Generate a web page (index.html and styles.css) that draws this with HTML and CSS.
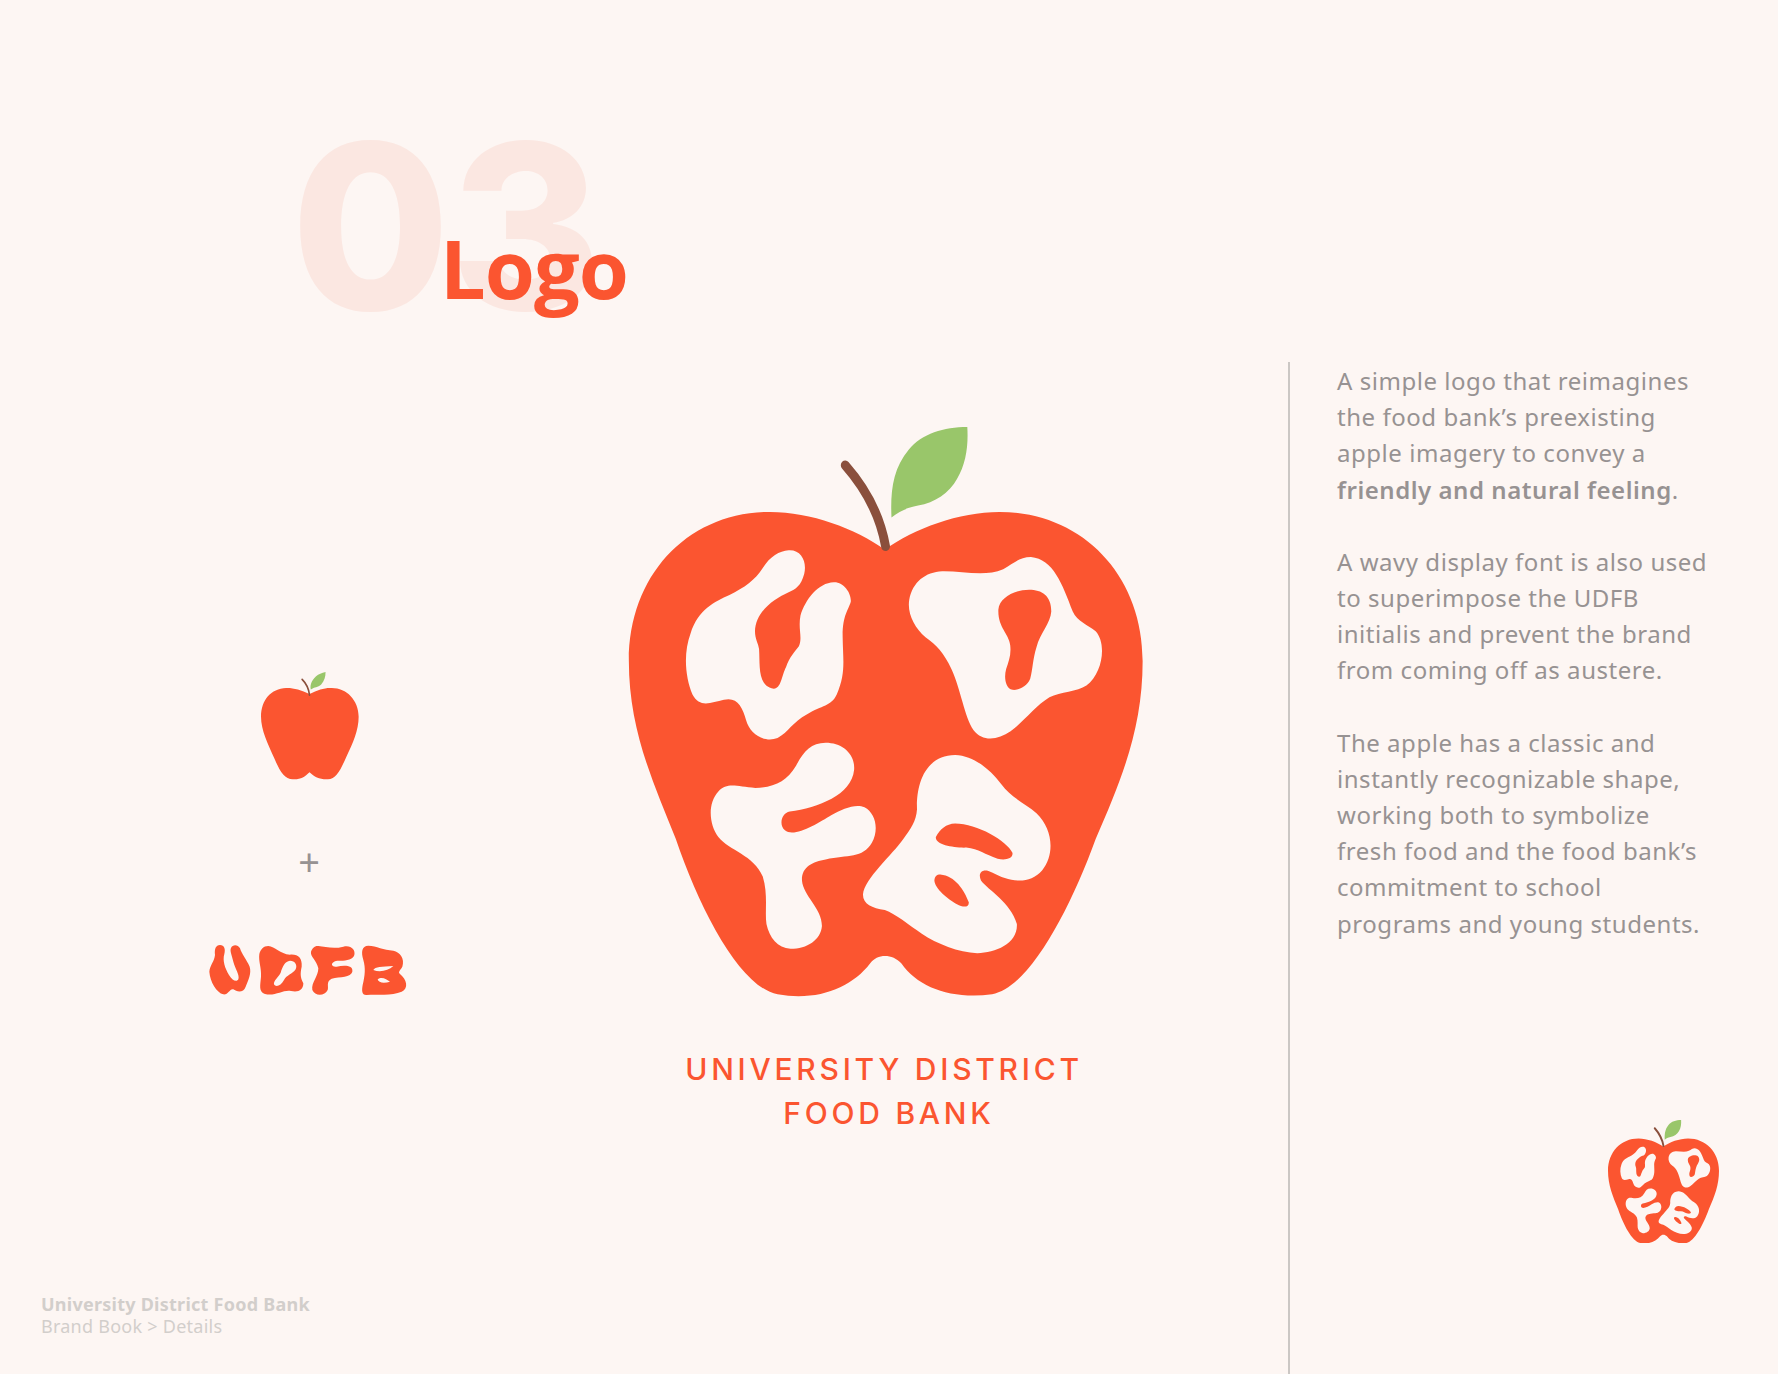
FILE: index.html
```html
<!DOCTYPE html>
<html lang="en">
<head>
<meta charset="utf-8">
<title>University District Food Bank – Logo</title>
<link rel="stylesheet" href="styles.css">
</head>
<body>
<svg class="defs" width="0" height="0" aria-hidden="true">
  <defs>
    <g id="apple-full">
      <path class="red" d="M770 378C690 325 570 283 460 283C240 283 78 440 78 660C78 830 140 960 205 1110C270 1290 380 1486 480 1503C590 1521 680 1486 730 1425C750 1400 790 1400 815 1425C860 1486 950 1516 1060 1503C1160 1486 1270 1290 1340 1110C1410 960 1467 830 1467 660C1467 440 1300 283 1080 283C970 283 850 325 770 378Z"/>
      <path class="leaf" d="M993 68C930 68 870 85 835 125C790 175 785 235 788 297C810 283 825 273 860 267C905 260 945 235 965 200C990 160 996 115 993 68Z"/>
      <path class="stem stem-big" d="M663 165C710 215 755 280 772 370"/>
      <path class="paper" fill-rule="evenodd" d="M510 380C545 378 560 410 552 440C543 470 530 478 510 486C470 503 420 535 419 585C419 605 428 615 430 630C433 670 425 725 470 730C490 728 490 700 503 675C512 650 528 635 538 622C548 600 535 580 542 545C555 505 590 462 632 461C660 460 680 490 678 510C672 530 655 545 656 600C657 660 665 690 640 745C625 775 600 772 560 795C520 815 510 840 480 855C445 868 405 845 395 810C385 775 370 750 335 758C300 765 270 780 250 745C230 700 225 640 245 590C265 530 310 510 350 493C390 475 420 455 440 425C460 395 485 382 510 380Z"/>
      <path class="paper" fill-rule="evenodd" d="M925 433C980 432 1040 448 1090 428C1120 412 1135 397 1165 397C1225 402 1250 465 1278 535C1290 560 1320 570 1340 585C1370 615 1360 690 1315 722C1290 738 1245 738 1215 752C1175 775 1150 810 1110 838C1075 860 1035 865 1010 835C985 800 975 730 950 680C930 640 910 620 880 600C850 575 830 540 836 505C845 460 880 435 925 433ZM1160 480C1195 480 1220 495 1220 535C1218 565 1190 590 1180 625C1170 655 1170 680 1163 705C1155 725 1130 735 1115 733C1095 728 1092 700 1098 680C1105 660 1112 645 1109 620C1105 590 1075 575 1077 530C1080 500 1120 480 1160 480Z"/>
      <path class="paper" d="M610 867C655 867 690 895 687 935C680 1000 590 1030 513 1041C490 1045 483 1075 500 1088C525 1108 590 1070 625 1050C655 1035 690 1020 715 1030C745 1045 755 1085 735 1120C710 1160 670 1150 610 1162C575 1168 545 1180 546 1215C550 1255 600 1285 600 1330C597 1365 560 1388 515 1388C480 1385 458 1360 450 1325C445 1295 455 1250 440 1205C415 1150 350 1140 320 1105C295 1075 290 1020 320 990C345 965 370 978 420 981C470 980 505 965 530 925C550 890 570 867 610 867Z"/>
      <path class="paper" fill-rule="evenodd" d="M960 898C1015 900 1060 940 1085 972C1110 1005 1150 1020 1180 1045C1225 1085 1230 1150 1195 1190C1160 1228 1105 1218 1060 1195C1035 1182 1020 1195 1030 1215C1050 1240 1110 1270 1127 1325C1130 1375 1070 1398 1020 1399C970 1398 910 1375 870 1350C835 1328 800 1300 770 1290C735 1285 710 1275 711 1250C715 1210 790 1150 820 1110C840 1085 855 1065 857 1035C855 985 870 900 960 898ZM960 1071C1020 1071 1100 1115 1115 1145C1118 1160 1095 1165 1075 1160C1040 1150 1025 1135 990 1132C955 1133 905 1125 908 1105C920 1085 935 1072 960 1071ZM920 1200C960 1203 985 1240 997 1270C998 1285 980 1283 965 1275C940 1262 905 1235 904 1215C905 1205 910 1200 920 1200Z"/>
    </g>
  </defs>
</svg>

<div class="page">
  <main class="main">
    <header class="header">
      <div class="number">03</div>
      <h1 class="title">Logo</h1>
    </header>

    <section class="stage">
      <div class="marks">
        <svg class="mark-apple" viewBox="200 60 320 335" role="img" aria-label="Apple mark">
          <path class="red" d="M360 132C335 120 310 113 290 114C245 116 215 150 215 200C215 240 235 280 255 325C270 360 285 387 310 387C335 388 345 380 360 366C375 380 390 388 415 387C440 387 452 360 470 320C490 280 507 240 507 200C507 150 470 113 425 114C405 113 385 120 360 132Z"/>
          <path class="leaf" d="M408 66C385 70 370 85 365 100C362 108 363 115 364 118C375 110 385 112 395 103C405 92 408 80 408 66Z"/>
          <path class="stem stem-small" d="M338 88C350 100 358 115 360 135"/>
        </svg>
        <div class="plus">+</div>
        <svg class="mark-word" viewBox="0 0 615 180" role="img" aria-label="UDFB wavy wordmark">
          <path class="red" d="M45 15C58 15 62 28 58 42C52 62 60 85 72 105C80 120 95 128 100 118C105 105 90 85 85 65C80 45 74 32 78 24C82 14 98 12 105 25C110 42 125 60 134 80C140 100 130 120 122 140C115 160 95 155 85 148C75 144 70 165 55 163C35 158 15 125 13 95C15 75 28 65 30 45C28 28 32 15 45 15Z"/>
          <path class="red" fill-rule="evenodd" d="M190 18C210 20 225 42 255 44C280 42 292 55 290 80C286 100 285 110 295 130C295 150 280 158 258 153C235 148 210 170 180 162C160 155 166 135 168 110C170 85 160 65 163 42C167 28 175 18 190 18ZM255 62C270 62 278 75 272 88C262 103 245 105 237 120C228 138 212 142 207 133C205 122 220 112 227 98C233 78 240 64 255 62Z"/>
          <path class="red" d="M340 18C360 20 385 28 415 20C438 14 452 30 448 45C444 60 420 63 400 62C380 62 372 80 395 80C420 75 445 76 442 95C438 112 405 110 380 116C362 125 372 140 368 150C360 168 330 170 322 150C318 128 340 110 340 85C335 60 315 50 318 35C322 25 328 17 340 18Z"/>
          <path class="red" fill-rule="evenodd" d="M490 17C515 18 535 30 565 32C585 36 600 55 592 80C585 92 578 96 585 102C605 118 612 145 590 155C560 168 515 162 485 165C470 166 470 152 473 135C480 105 482 85 475 60C468 35 470 18 490 17ZM505 90C510 80 530 80 565 78C550 92 525 98 505 90ZM518 118C530 108 545 118 555 125C540 130 520 130 518 118Z"/>
        </svg>
      </div>

      <div class="primary">
        <svg class="logo-big" viewBox="0 0 1568 1568" preserveAspectRatio="none" role="img" aria-label="University District Food Bank apple logo">
          <use href="#apple-full"/>
        </svg>
        <p class="logo-name"><span class="name-line">UNIVERSITY DISTRICT</span><span class="name-line name-line-second">FOOD BANK</span></p>
      </div>
    </section>

    <footer class="footer">
      <strong class="footer-title">University District Food Bank</strong>
      <span class="footer-crumb">Brand Book &gt; Details</span>
    </footer>
  </main>

  <aside class="aside">
    <div class="copy">
      <p>A simple logo that reimagines<br>the food bank’s preexisting<br>apple imagery to convey a<br><b>friendly and natural feeling</b>.</p>
      <p>A wavy display font is also used<br>to superimpose the UDFB<br>initialis and prevent the brand<br>from coming off as austere.</p>
      <p>The apple has a classic and<br>instantly recognizable shape,<br>working both to symbolize<br>fresh food and the food bank’s<br>commitment to school<br>programs and young students.</p>
    </div>
    <svg class="logo-corner" viewBox="78 68 1389 1435" preserveAspectRatio="none" role="img" aria-label="Apple logo">
      <use href="#apple-full"/>
    </svg>
  </aside>
</div>
</body>
</html>
```

FILE: styles.css
```css
* { box-sizing: border-box; }
html, body { margin: 0; padding: 0; }
body { background: #fdf6f3; font-family: "Noto Sans", "Open Sans", sans-serif; }
p, h1 { margin: 0; }
.defs { position: absolute; }

.red { fill: #fb5530; }
.leaf { fill: #99c66a; }
.paper { fill: #fdf6f3; }
.stem { fill: none; stroke: #8a4f3c; stroke-linecap: round; }
.stem-big { stroke-width: 24; }
.stem-small { stroke-width: 5; }

.page {
  width: 1778px;
  height: 1374px;
  display: grid;
  grid-template-columns: 1288px 1fr;
  overflow: hidden;
}

.main { display: flex; flex-direction: column; height: 1374px; }

.header { position: relative; height: 400px; padding: 111px 0 0 291px; }
.number {
  font-family: Inter, sans-serif;
  font-weight: 800;
  font-size: 230px;
  line-height: 1;
  letter-spacing: 0;
  color: #fbe7e1;
}
.title {
  position: absolute;
  left: 440px;
  top: 227px;
  font-family: "Open Sans", sans-serif;
  font-weight: 700;
  font-size: 81px;
  line-height: 1;
  letter-spacing: -1px;
  color: #fb5530;
}

.stage { display: flex; margin-left: 109px; }
.marks {
  width: 400px;
  padding-top: 270px;
  display: flex;
  flex-direction: column;
  align-items: center;
}
.mark-apple { width: 107px; height: 112px; }
.plus {
  margin-top: 57px;
  height: 44px;
  font-size: 38px;
  line-height: 44px;
  color: #979292;
}
.mark-word { width: 205px; height: 60px; margin: 57px 4px 0 0; }

.primary { width: 580px; margin-left: 91px; display: flex; flex-direction: column; }
.logo-big { width: 580px; height: 620px; display: block; }
.logo-name {
  margin-top: 27px;
  padding-right: 12px;
  text-align: center;
  font-family: Inter, sans-serif;
  font-weight: 500;
  font-size: 30px;
  line-height: 44px;
  letter-spacing: 3.75px;
  color: #fb5530;
}
.name-line { display: block; }
.name-line-second { padding-left: 10px; }

.footer {
  margin-top: auto;
  padding: 0 0 37px 41px;
  display: flex;
  flex-direction: column;
  color: #d2cecb;
  font-size: 18px;
  line-height: 22px;
  letter-spacing: 0.25px;
}
.footer-title { font-weight: 700; }

.aside {
  margin-top: 362px;
  border-left: 2px solid #cbc7c4;
  padding-left: 47px;
  display: flex;
  flex-direction: column;
}
.copy {
  display: flex;
  flex-direction: column;
  gap: 36px;
  padding-top: 1px;
  font-size: 24px;
  line-height: 36.2px;
  letter-spacing: 0.54px;
  color: #979292;
}
.copy b { font-weight: 600; }
.logo-corner {
  margin-top: auto;
  margin-bottom: 131px;
  align-self: flex-end;
  margin-right: 59px;
  width: 111px;
  height: 123px;
  display: block;
}
```
